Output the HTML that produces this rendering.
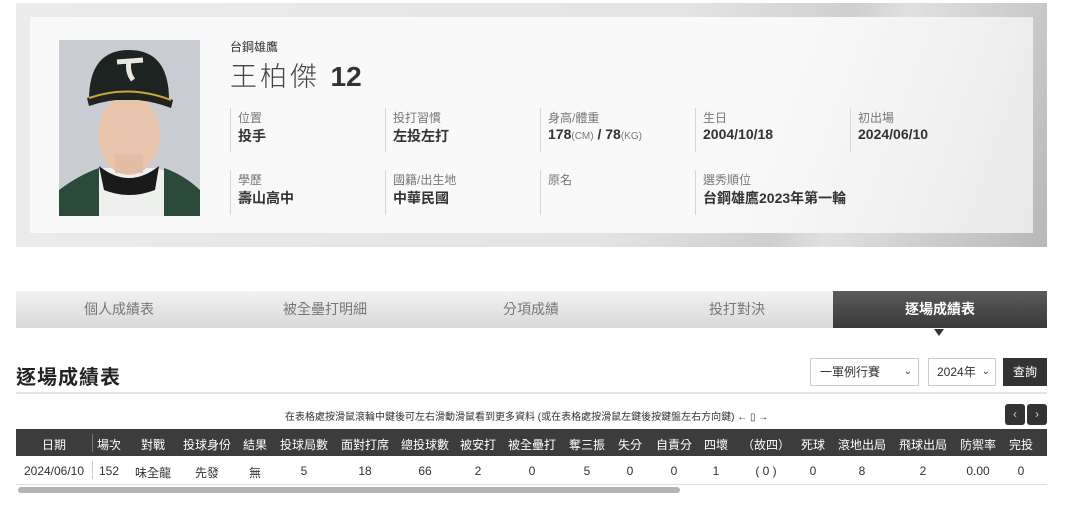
<!DOCTYPE html>
<html><head><meta charset="utf-8"><style>
*{margin:0;padding:0;box-sizing:border-box}
body{width:1080px;height:511px;background:#fff;font-family:"Liberation Sans","Noto Sans CJK TC",sans-serif;color:#333;position:relative;overflow:hidden}
.a{position:absolute;white-space:nowrap}
.outer{left:16px;top:3px;width:1031px;height:244px;background:linear-gradient(110deg,#ececec 0%,#e4e4e4 60%,#cfcfcf 75%,#e0e0e0 80%,#b8b8b8 100%)}
.inner{left:30px;top:17px;width:1003px;height:216px;background:linear-gradient(110deg,#f9f9f9 70%,#f2f2f2 85%,#e8e8e8 100%)}
.sep{position:absolute;width:1px;background:#d6d6d6}
.lb{font-size:12px;color:#777}
.vl{font-size:14px;color:#333;font-weight:bold}
.tab{top:291px;height:37px;width:206px;background:linear-gradient(#f2f2f2,#d8d8d8);color:#777;font-size:14px;text-align:center;line-height:37px}
.th{color:#fff;font-size:12px;transform:translateX(-50%);top:436px}
.td{color:#333;font-size:12px;transform:translateX(-50%);top:464px}
</style></head><body>
<div class="a outer"></div>
<div class="a inner"></div>
<svg class="a" style="left:59px;top:40px" width="141" height="176" viewBox="0 0 141 176">
<rect width="141" height="176" fill="#c9ccd3"/>
<path d="M0 176 L0 150 Q20 135 45 128 L96 128 Q125 135 141 150 L141 176Z" fill="#eef0ee"/>
<path d="M0 150 Q20 135 40 128 L40 176 L0 176Z M141 150 Q125 135 105 128 L105 176 L141 176Z" fill="#2b4a3a"/>
<path d="M40 126 Q70 150 100 126 L96 150 Q70 160 45 150Z" fill="#1a1a1a"/>
<ellipse cx="70" cy="95" rx="31" ry="40" fill="#e8c4ad"/>
<rect x="56" y="115" width="28" height="18" fill="#e2bca3"/>
<path d="M30 60 Q30 10 70 10 Q110 10 110 60 Z" fill="#1d2320"/>
<path d="M28 58 Q70 42 114 60 L112 68 Q70 52 30 66Z" fill="#222"/>
<path d="M30 58 Q70 44 112 60" stroke="#c8a640" stroke-width="2" fill="none"/>
<path d="M58 22 L84 20 M70 21 Q68 32 74 40" stroke="#e8e8e0" stroke-width="5" fill="none"/>
</svg>
<div class="a" style="left:230px;top:38px;font-size:12px;color:#333">台鋼雄鷹</div>
<div class="a" style="left:230px;top:55px;font-size:27px;color:#444;letter-spacing:3px;font-weight:300">王柏傑 <span style="font-size:28px;letter-spacing:0;color:#333;font-weight:700">12</span></div>

<div class="sep" style="left:230px;top:108px;height:44px"></div>
<div class="sep" style="left:385px;top:108px;height:44px"></div>
<div class="sep" style="left:540px;top:108px;height:44px"></div>
<div class="sep" style="left:695px;top:108px;height:44px"></div>
<div class="sep" style="left:850px;top:108px;height:44px"></div>
<div class="sep" style="left:230px;top:170px;height:45px"></div>
<div class="sep" style="left:385px;top:170px;height:45px"></div>
<div class="sep" style="left:540px;top:170px;height:45px"></div>
<div class="sep" style="left:695px;top:170px;height:45px"></div>

<div class="a lb" style="left:238px;top:109px">位置</div><div class="a vl" style="left:238px;top:126px">投手</div>
<div class="a lb" style="left:393px;top:109px">投打習慣</div><div class="a vl" style="left:393px;top:126px">左投左打</div>
<div class="a lb" style="left:548px;top:109px">身高/體重</div><div class="a vl" style="left:548px;top:126px">178<span style="font-size:10px;font-weight:normal;color:#777">(CM)</span> / 78<span style="font-size:10px;font-weight:normal;color:#777">(KG)</span></div>
<div class="a lb" style="left:703px;top:109px">生日</div><div class="a vl" style="left:703px;top:126px">2004/10/18</div>
<div class="a lb" style="left:858px;top:109px">初出場</div><div class="a vl" style="left:858px;top:126px">2024/06/10</div>
<div class="a lb" style="left:238px;top:171px">學歷</div><div class="a vl" style="left:238px;top:188px">壽山高中</div>
<div class="a lb" style="left:393px;top:171px">國籍/出生地</div><div class="a vl" style="left:393px;top:188px">中華民國</div>
<div class="a lb" style="left:548px;top:171px">原名</div>
<div class="a lb" style="left:703px;top:171px">選秀順位</div><div class="a vl" style="left:703px;top:188px">台鋼雄鷹2023年第一輪</div>

<div class="a tab" style="left:16px">個人成績表</div>
<div class="a tab" style="left:222px">被全壘打明細</div>
<div class="a tab" style="left:428px">分項成績</div>
<div class="a tab" style="left:634px">投打對決</div>
<div class="a tab" style="left:833px;width:214px;background:linear-gradient(#5a5a5a,#3a3a3a);color:#fff;font-weight:bold">逐場成績表</div>
<div class="a" style="left:934px;top:329px;width:0;height:0;border-left:5px solid transparent;border-right:5px solid transparent;border-top:7px solid #333"></div>

<div class="a" style="left:16px;top:361px;font-size:20px;font-weight:bold;color:#222;letter-spacing:1px">逐場成績表</div>
<div class="a" style="left:810px;top:358px;width:109px;height:28px;border:1px solid #ccc;font-size:12px;line-height:26px;padding-left:9px">一軍例行賽<span style="position:absolute;right:6px;font-size:10px">&#8964;</span></div>
<div class="a" style="left:928px;top:358px;width:68px;height:28px;border:1px solid #ccc;font-size:12px;line-height:26px;padding-left:8px">2024年<span style="position:absolute;right:5px;font-size:10px">&#8964;</span></div>
<div class="a" style="left:1003px;top:358px;width:44px;height:28px;background:#333;color:#fff;font-size:12px;line-height:28px;text-align:center">查詢</div>
<div class="a" style="left:16px;top:392px;width:1031px;height:2px;background:#e4e4e4"></div>
<div class="a" style="left:285px;top:408px;font-size:10px;color:#333">在表格處按滑鼠滾輪中鍵後可左右滑動滑鼠看到更多資料 (或在表格處按滑鼠左鍵後按鍵盤左右方向鍵) ← ▯ →</div>
<div class="a" style="left:1005px;top:404px;width:20px;height:21px;background:#333;border-radius:3px;color:#ccc;font-size:12px;text-align:center;line-height:21px">&lsaquo;</div>
<div class="a" style="left:1027px;top:404px;width:20px;height:21px;background:#333;border-radius:3px;color:#ccc;font-size:12px;text-align:center;line-height:21px">&rsaquo;</div>

<div class="a" style="left:16px;top:429px;width:1031px;height:27px;background:#3c3c3c"></div>
<div class="a" style="left:92px;top:434px;width:1px;height:18px;background:#777"></div>
<div class="a" style="left:92px;top:461px;width:1px;height:18px;background:#ccc"></div>
<div class="a" style="left:16px;top:484px;width:1031px;height:1px;background:#e0e0e0"></div>
<div class="a" style="left:18px;top:487px;width:662px;height:6px;background:#b4b4b4;border-radius:3px"></div>

<span class="a th" style="left:54px">日期</span><span class="a th" style="left:109px">場次</span><span class="a th" style="left:153px">對戰</span><span class="a th" style="left:207px">投球身份</span><span class="a th" style="left:255px">結果</span><span class="a th" style="left:304px">投球局數</span><span class="a th" style="left:365px">面對打席</span><span class="a th" style="left:425px">總投球數</span><span class="a th" style="left:478px">被安打</span><span class="a th" style="left:532px">被全壘打</span><span class="a th" style="left:587px">奪三振</span><span class="a th" style="left:630px">失分</span><span class="a th" style="left:674px">自責分</span><span class="a th" style="left:716px">四壞</span><span class="a th" style="left:766px">（故四）</span><span class="a th" style="left:813px">死球</span><span class="a th" style="left:862px">滾地出局</span><span class="a th" style="left:923px">飛球出局</span><span class="a th" style="left:978px">防禦率</span><span class="a th" style="left:1021px">完投</span>

<span class="a td" style="left:54px">2024/06/10</span><span class="a td" style="left:109px">152</span><span class="a td" style="left:153px">味全龍</span><span class="a td" style="left:207px">先發</span><span class="a td" style="left:255px">無</span><span class="a td" style="left:304px">5</span><span class="a td" style="left:365px">18</span><span class="a td" style="left:425px">66</span><span class="a td" style="left:478px">2</span><span class="a td" style="left:532px">0</span><span class="a td" style="left:587px">5</span><span class="a td" style="left:630px">0</span><span class="a td" style="left:674px">0</span><span class="a td" style="left:716px">1</span><span class="a td" style="left:766px">( 0 )</span><span class="a td" style="left:813px">0</span><span class="a td" style="left:862px">8</span><span class="a td" style="left:923px">2</span><span class="a td" style="left:978px">0.00</span><span class="a td" style="left:1021px">0</span>
</body></html>
